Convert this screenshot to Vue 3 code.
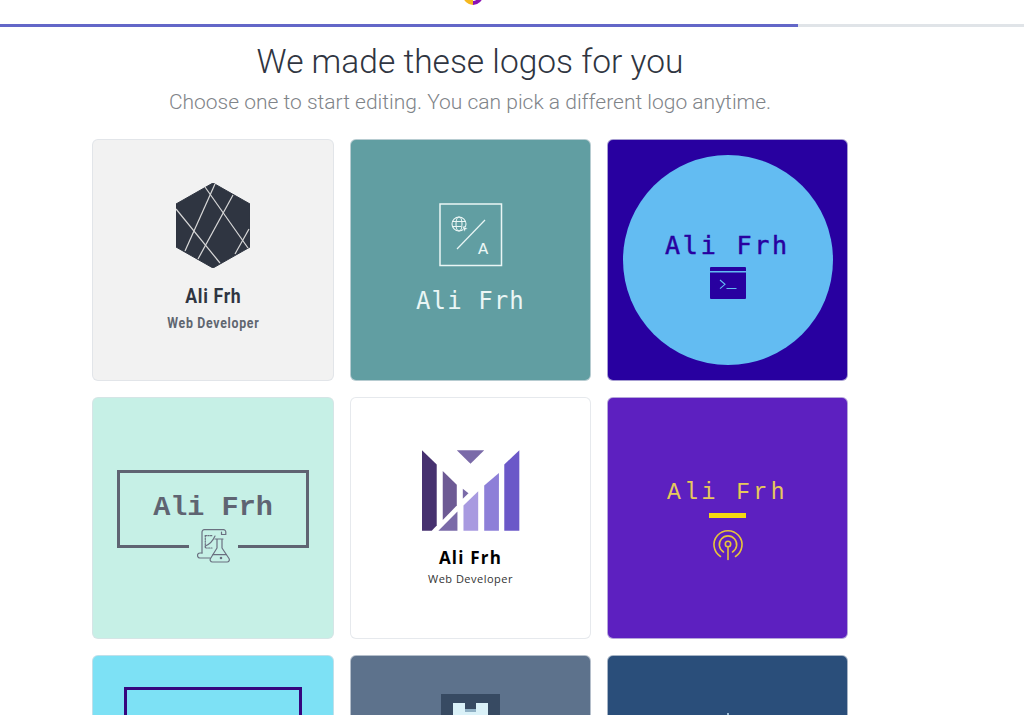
<script setup>
const hexLines = [
  [29, 4, 72, 65],
  [39, 1, 9, 68],
  [57, 12, 22, 76],
  [0, 26, 44, 80],
  [73, 46, 59, 71],
]

const mBars = [
  { points: '66,30 110,72 110,255 95,270 66,270', fill: '#46316f' },
  { points: '128,92 170,133 170,195 128,238', fill: '#6d5a94' },
  { points: '115,270 172,213 172,270', fill: '#7a6aa8' },
  { points: '188,145 205,158 188,175', fill: '#7a6aa8' },
  { points: '190,270 190,195 234,152 234,270', fill: '#a89ae0' },
  { points: '252,135 296,98 296,270 252,270', fill: '#8d7fd8' },
  { points: '312,72 357,30 357,270 312,270', fill: '#6b58c8' },
  { points: '170,30 252,30 211,70', fill: '#7a6aa8' },
]
</script>

<template>
  <div class="page">
    <div class="topbar">
      <svg class="brand" width="20" height="20" viewBox="0 0 20 20">
        <path d="M0 10a10 10 0 0 0 10 10V10z" fill="#f5b81f" />
        <path d="M10 20a10 10 0 0 0 10-10h-4a6 6 0 0 1-6 6z" fill="#8a12b5" />
      </svg>
    </div>
    <div class="progress">
      <div class="progress-fill"></div>
    </div>

    <main class="content">
      <h1 class="title">We made these logos for you</h1>
      <p class="subtitle">Choose one to start editing. You can pick a different logo anytime.</p>

      <div class="grid">
        <div class="card card-hex">
          <svg width="74" height="85" viewBox="0 0 74 85">
            <polygon points="37,0 74,21 74,64 37,85 0,64 0,21" fill="#2f3541" stroke="#2f3541" stroke-width="1" stroke-linejoin="round" />
            <line
              v-for="(l, i) in hexLines"
              :key="i"
              :x1="l[0]"
              :y1="l[1]"
              :x2="l[2]"
              :y2="l[3]"
              stroke="#d9d9d9"
              stroke-width="1.2"
            />
          </svg>
          <div class="hex-name">Ali Frh</div>
          <div class="hex-tag">Web Developer</div>
        </div>

        <div class="card card-teal">
          <svg width="64" height="64" viewBox="0 0 64 64">
            <rect x="1" y="1" width="61.5" height="61.5" fill="none" stroke="#eaf6f5" stroke-width="1.5" />
            <line x1="46" y1="17" x2="18" y2="46" stroke="#eaf6f5" stroke-width="1.2" />
            <g fill="none" stroke="#eaf6f5" stroke-width="1.1">
              <circle cx="20" cy="21" r="7" />
              <ellipse cx="20" cy="21" rx="3" ry="7" />
              <line x1="13" y1="18.5" x2="27" y2="18.5" />
              <line x1="13" y1="23.5" x2="27" y2="23.5" />
            </g>
            <path d="M23 23l6 2.4-2.4 1.1-1.2 2.5z" fill="#eaf6f5" stroke="#619ea2" stroke-width="0.6" />
            <text x="44" y="51" text-anchor="middle" class="teal-a">A</text>
          </svg>
          <div class="teal-name">Ali Frh</div>
        </div>

        <div class="card card-navy">
          <div class="circle">
            <div class="circle-name">Ali Frh</div>
            <svg width="36" height="32" viewBox="0 0 36 32">
              <path d="M1 0h34a1 1 0 0 1 1 1v3H0V1a1 1 0 0 1 1-1z" fill="#2800a0" />
              <path d="M0 5.5h36V31a1 1 0 0 1-1 1H1a1 1 0 0 1-1-1z" fill="#2800a0" />
              <path d="M10 13l5 4.3-5 4.3M16.500 21.500h10" fill="none" stroke="#63bcf2" stroke-width="1.100" />
            </svg>
          </div>
        </div>

        <div class="card card-mint">
          <div class="frame">
            <span class="frame-name">Ali Frh</span>
            <span class="frame-icon">
              <svg width="33" height="34" viewBox="0 0 33 34" fill="none" stroke="#6a7080" stroke-width="1.200" stroke-linejoin="round" stroke-linecap="round">
                <path d="M5 24V3a2.300 2.300 0 0 1 2.300-2.300H26.500a2.300 2.300 0 0 1 2.300 2.300v2.500H24.500V3" />
                <path d="M13 29H3a2.500 2.500 0 0 1 0-5H5" />
                <path d="M8.300 6.700V19H15" stroke-dasharray="1.300 1.300" />
                <path d="M8.300 6.700H16" stroke-dasharray="1.300 1.300" />
                <path d="M8.300 17c4-1.500 7.500-5 9.700-10" />
                <path d="M18 10h8M20 10v9l-6.500 10.500a2.300 2.300 0 0 0 2 3.500H30a2.300 2.300 0 0 0 2-3.500L25 19v-9" />
                <path d="M16 25.700h13.300" />
                <circle cx="24" cy="29" r="0.700" fill="#6a7080" />
              </svg>
            </span>
          </div>
        </div>

        <div class="card card-white">
          <svg width="102" height="87" viewBox="60 20 305 260">
            <polygon v-for="(b, i) in mBars" :key="i" :points="b.points" :fill="b.fill" />
          </svg>
          <div class="m-name">Ali Frh</div>
          <div class="m-tag">Web Developer</div>
        </div>

        <div class="card card-violet">
          <div class="violet-name">Ali Frh</div>
          <div class="violet-bar"></div>
          <svg width="32" height="32" viewBox="0 0 32 32" fill="none" stroke="#e6c53a" stroke-width="1.600" stroke-linecap="round">
            <path d="M8.500 27.500a14 14 0 1 1 15 0" />
            <path d="M11.500 23a8.700 8.700 0 1 1 9 0" />
            <circle cx="16" cy="15" r="2.700" />
            <path d="M16 17.700V30.500" />
          </svg>
        </div>

        <div class="card card-sky">
          <div class="sky-frame"></div>
        </div>

        <div class="card card-slate">
          <div class="slate-box">
            <div class="slate-h"></div>
          </div>
        </div>

        <div class="card card-deep">
          <div class="deep-dot"></div>
        </div>
      </div>
    </main>
  </div>
</template>

<style scoped>
.page {
  height: 100vh;
  overflow: hidden;
  background: #fff;
  font-family: "Roboto", "Liberation Sans", sans-serif;
}

.topbar {
  width: 946px;
  height: 24px;
  display: flex;
  justify-content: center;
  overflow: hidden;
}

.brand {
  margin-top: -15px;
}

.progress {
  height: 3px;
  background: #e0e4e8;
}

.progress-fill {
  width: 798px;
  height: 100%;
  background: #6367c8;
}

.content {
  width: 940px;
  display: flex;
  flex-direction: column;
  align-items: center;
}

.title {
  margin: 14px 0 0;
  font-size: 33.500px;
  line-height: 42px;
  font-weight: 300;
  color: #2f3541;
}

.subtitle {
  margin: 5px 0 0;
  font-size: 21px;
  line-height: 28px;
  font-weight: 300;
  color: #7f8489;
}

.grid {
  margin-top: 23px;
  display: grid;
  grid-template-columns: 242px 241px 241px;
  grid-auto-rows: 242px;
  gap: 16px;
}

.card {
  box-sizing: border-box;
  border-radius: 6px;
  border: 1px solid rgba(220, 224, 230, 0.7);
  display: flex;
  flex-direction: column;
  align-items: center;
  justify-content: center;
  overflow: hidden;
}

.card-hex {
  background: #f2f2f2;
  padding-bottom: 5px;
}

.hex-name {
  margin-top: 16px;
  font-size: 21px;
  line-height: 24px;
  font-weight: 700;
  letter-spacing: 0.8px;
  color: #2f3541;
  transform: scaleX(0.84);
}

.hex-tag {
  margin-top: 6px;
  font-size: 14px;
  line-height: 18px;
  font-weight: 700;
  letter-spacing: 0.8px;
  color: #5f6670;
  transform: scaleX(0.88);
}

.card-teal {
  background: #619ea2;
  padding-bottom: 1px;
}

.teal-a {
  font-family: "Liberation Mono", monospace;
  font-size: 17px;
  fill: #eaf6f5;
}

.teal-name {
  margin-top: 19px;
  font-family: "DejaVu Sans Mono", monospace;
  font-size: 24px;
  line-height: 30px;
  letter-spacing: 1.100px;
  color: #eaf6f5;
}

.card-navy {
  background: #2800a0;
}

.circle {
  box-sizing: border-box;
  width: 210px;
  height: 210px;
  padding-top: 10px;
  border-radius: 50%;
  background: #63bcf2;
  color: #2800a0;
  display: flex;
  flex-direction: column;
  align-items: center;
  justify-content: center;
}

.circle-name {
  margin-bottom: 6px;
  font-family: "DejaVu Sans Mono", monospace;
  font-size: 25px;
  line-height: 30px;
  letter-spacing: 2.800px;
  -webkit-text-stroke: 0.5px #2800a0;
}

.card-mint {
  background: #c6f0e6;
}

.frame {
  box-sizing: border-box;
  position: relative;
  width: 192px;
  height: 78px;
  margin-bottom: 19px;
  border: 3px solid #5f6472;
  display: flex;
  align-items: center;
  justify-content: center;
}

.frame-name {
  margin-bottom: 2px;
  font-family: "Liberation Mono", monospace;
  font-size: 28.500px;
  font-weight: 700;
  color: #5f6472;
}

.frame-icon {
  position: absolute;
  left: 69px;
  top: 56px;
  width: 33px;
  padding: 0 8px;
  background: #c6f0e6;
  line-height: 0;
}

.card-white {
  background: #fff;
  padding-bottom: 2px;
}

.m-name {
  margin-top: 12px;
  font-family: "Open Sans", sans-serif;
  font-size: 17px;
  line-height: 24px;
  font-weight: 700;
  letter-spacing: 1.200px;
  color: #000;
}

.m-tag {
  font-family: "Open Sans", sans-serif;
  font-size: 11px;
  line-height: 17px;
  letter-spacing: 0.500px;
  color: #333;
}

.card-violet {
  background: #5d20c0;
  padding-top: 7px;
}

.violet-name {
  font-family: "Liberation Mono", monospace;
  font-size: 23px;
  line-height: 22px;
  letter-spacing: 3.500px;
  color: #e6c95a;
}

.violet-bar {
  width: 37px;
  height: 5px;
  margin: 9px 0 11px;
  background: #f5d90f;
}

.card-sky {
  background: #7de1f5;
  justify-content: flex-start;
}

.sky-frame {
  box-sizing: border-box;
  width: 178px;
  height: 120px;
  margin-top: 31px;
  border: 3px solid #36067e;
}

.card-slate {
  background: #5d728c;
  justify-content: flex-start;
}

.slate-box {
  width: 59px;
  height: 70px;
  margin-top: 38px;
  background: #374a62;
  display: flex;
  justify-content: center;
}

.slate-h {
  width: 35px;
  height: 50px;
  margin-top: 9px;
  background:
    linear-gradient(#8fb0c4, #8fb0c4) center 6px / 11px 3px no-repeat,
    linear-gradient(#374a62, #374a62) center 0 / 11px 6px no-repeat,
    #daf1f8;
}

.card-deep {
  background: #2a4e7a;
  justify-content: flex-start;
}

.deep-dot {
  width: 2px;
  height: 2px;
  margin-top: 57px;
  background: #9fc0d8;
}
</style>

<style>
html,
body {
  margin: 0;
  background: #fff;
}
</style>
